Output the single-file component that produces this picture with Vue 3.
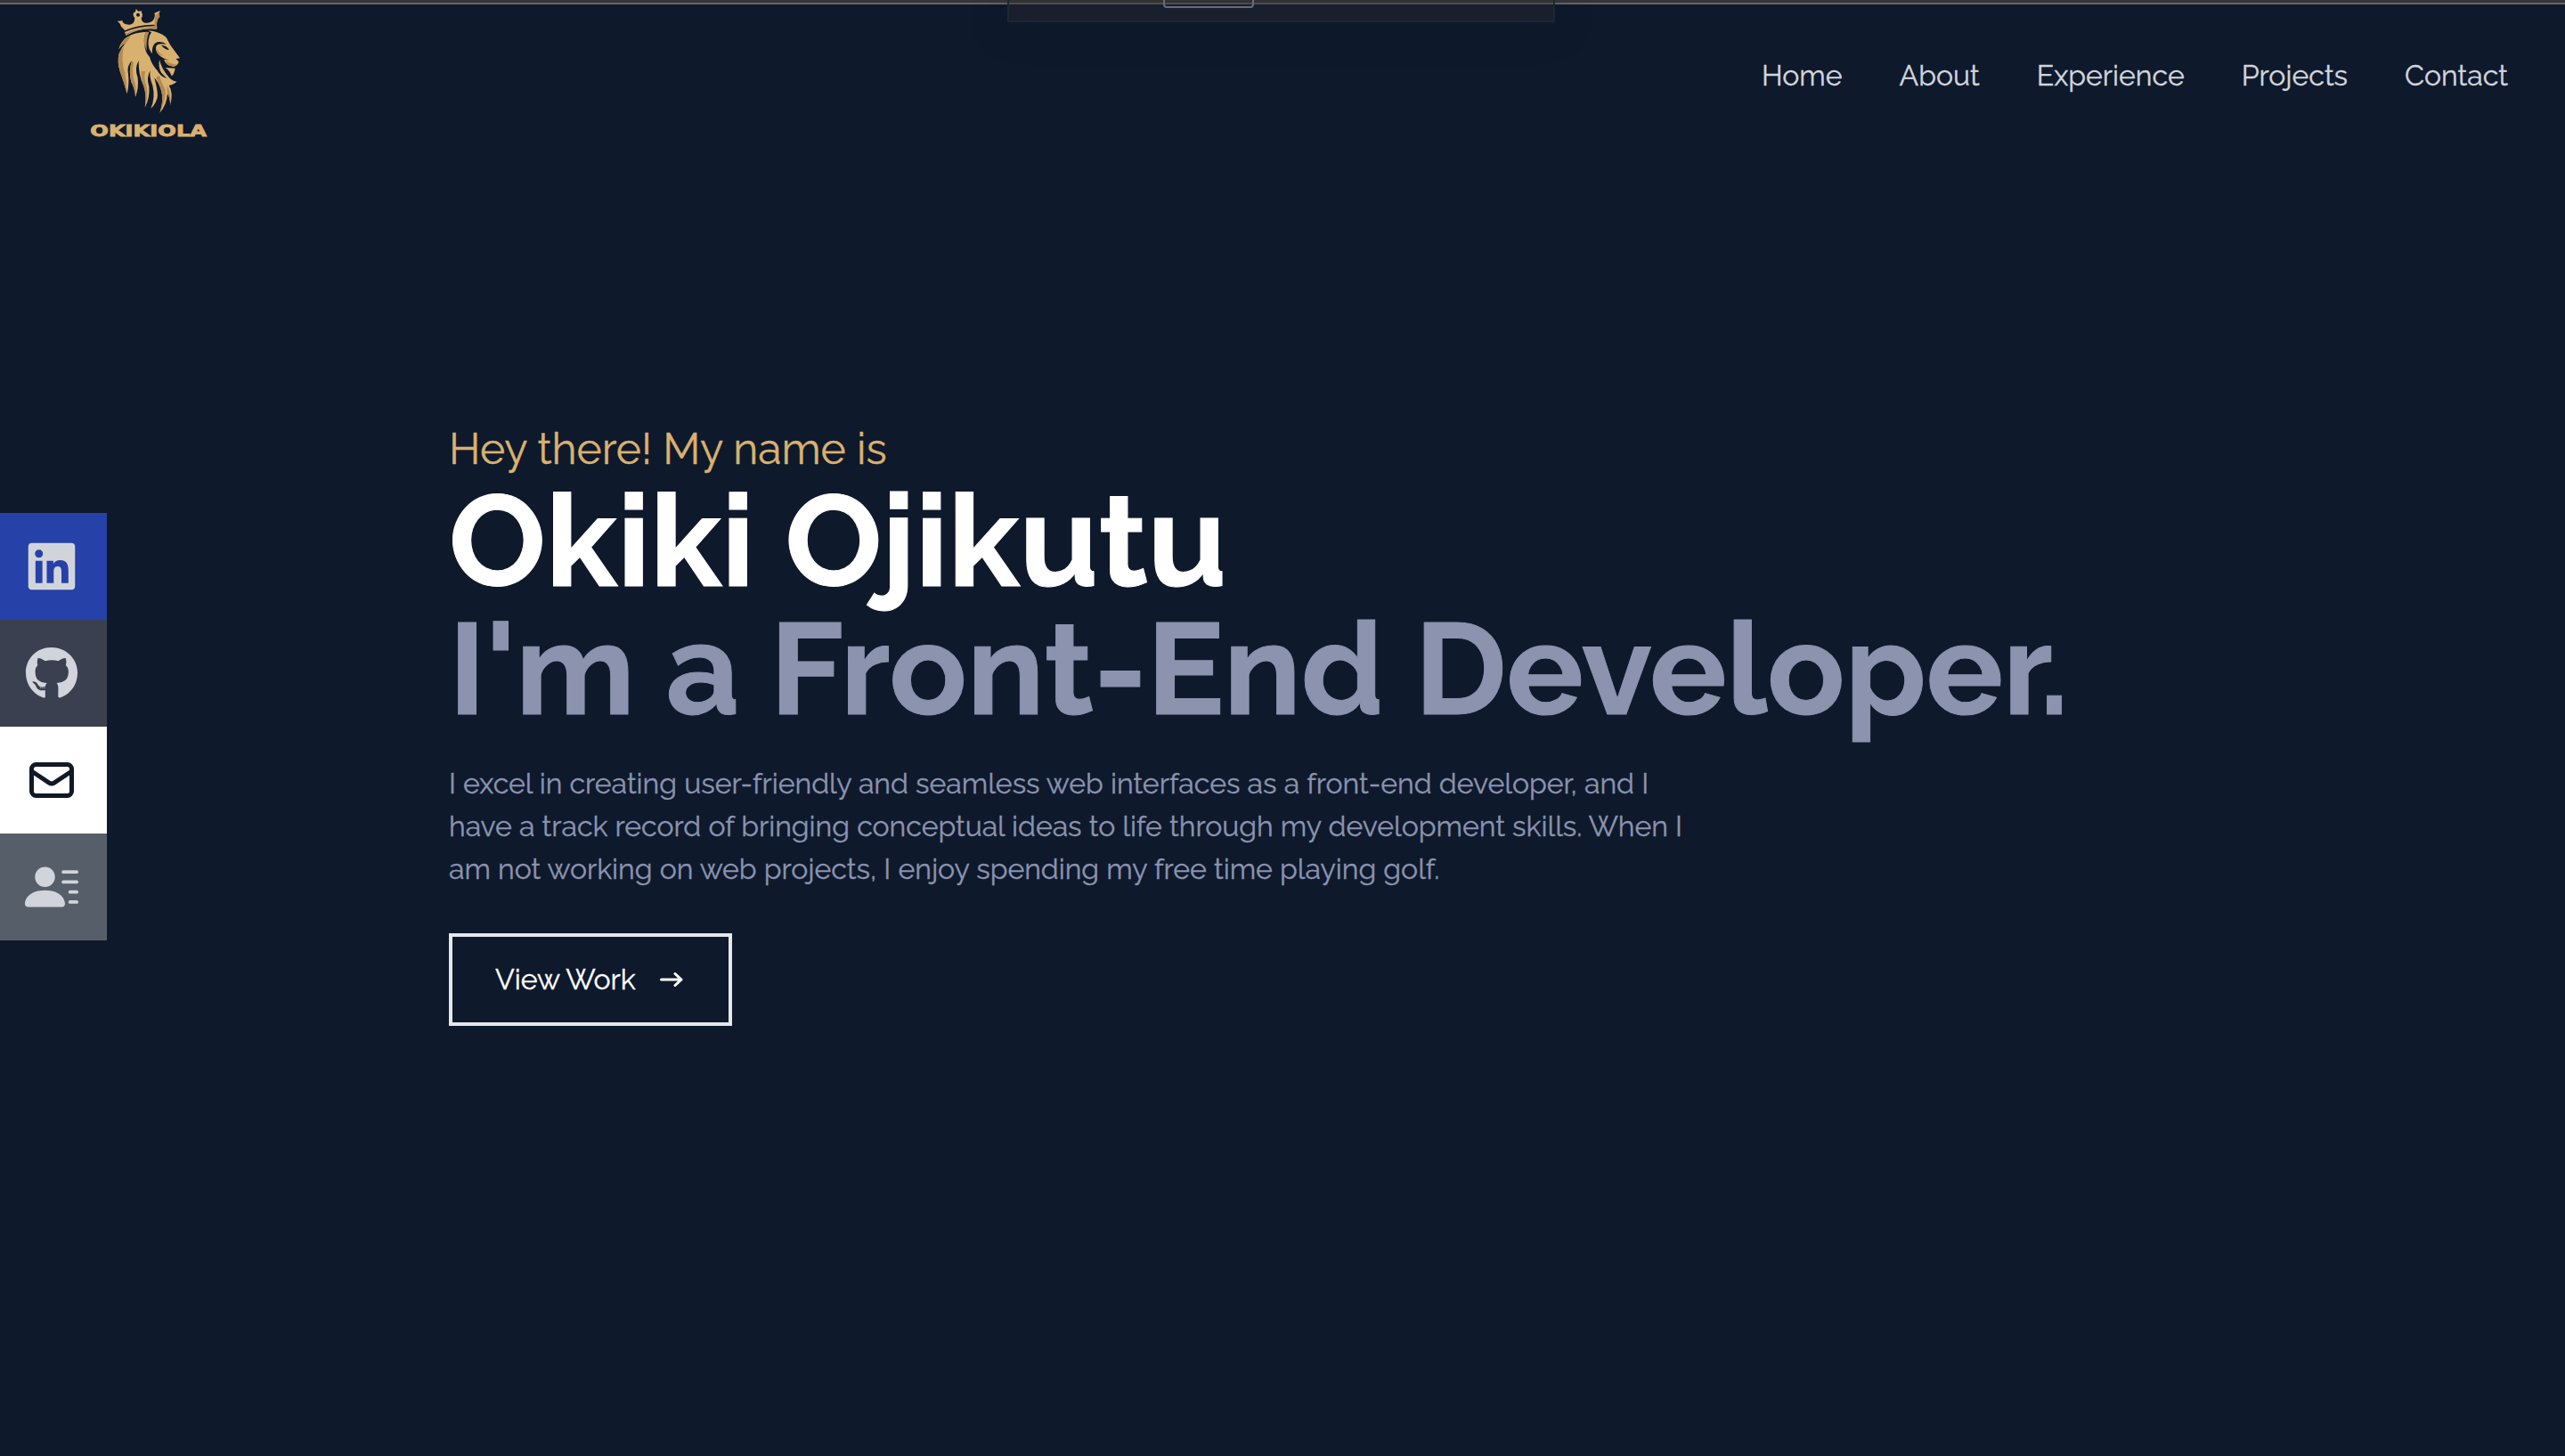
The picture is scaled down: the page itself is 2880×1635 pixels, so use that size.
<script setup>
const links = ['Home', 'About', 'Experience', 'Projects', 'Contact']
const socials = [
  { name: 'linkedin', box: '0 0 448 512', path: 'M416 32H31.9C14.3 32 0 46.5 0 64.3v383.4C0 465.5 14.3 480 31.9 480H416c17.6 0 32-14.5 32-32.3V64.3c0-17.8-14.4-32.3-32-32.3zM135.4 416H69V202.2h66.5V416zm-33.2-243c-21.3 0-38.5-17.3-38.5-38.5S80.9 96 102.2 96c21.2 0 38.5 17.3 38.5 38.5 0 21.3-17.2 38.5-38.5 38.5zm282.1 243h-66.4V312c0-24.8-.5-56.7-34.5-56.7-34.6 0-39.9 27-39.9 54.9V416h-66.4V202.2h63.7v29.2h.9c8.9-16.8 30.6-34.5 62.9-34.5 67.2 0 79.7 44.3 79.7 101.9V416z' },
  { name: 'github', box: '0 0 496 512', path: 'M165.9 397.4c0 2-2.3 3.6-5.2 3.6-3.3.3-5.6-1.3-5.6-3.6 0-2 2.3-3.6 5.2-3.6 3-.3 5.6 1.3 5.6 3.6zm-31.1-4.5c-.7 2 1.3 4.3 4.3 4.9 2.6 1 5.6 0 6.2-2s-1.3-4.3-4.3-5.2c-2.6-.7-5.5.3-6.2 2.3zm44.2-1.7c-2.9.7-4.9 2.6-4.6 4.9.3 2 2.9 3.3 5.9 2.6 2.9-.7 4.9-2.6 4.6-4.6-.3-1.9-3-3.2-5.9-2.9zM244.8 8C106.1 8 0 113.3 0 252c0 110.9 69.8 205.8 169.5 239.2 12.8 2.3 17.3-5.6 17.3-12.1 0-6.2-.3-40.4-.3-61.4 0 0-70 15-84.7-29.8 0 0-11.4-29.1-27.8-36.6 0 0-22.9-15.7 1.6-15.4 0 0 24.9 2 38.6 25.8 21.9 38.6 58.6 27.5 72.9 20.9 2.3-16 8.8-27.1 16-33.7-55.9-6.2-112.3-14.3-112.3-110.5 0-27.5 7.6-41.3 23.6-58.9-2.6-6.5-11.1-33.3 2.6-67.9 20.9-6.5 69 27 69 27 20-5.6 41.5-8.5 62.8-8.5s42.8 2.9 62.8 8.5c0 0 48.1-33.6 69-27 13.7 34.7 5.2 61.4 2.6 67.9 16 17.7 25.8 31.5 25.8 58.9 0 96.5-58.9 104.2-114.8 110.5 9.2 7.9 17 22.9 17 46.4 0 33.7-.3 75.4-.3 83.6 0 6.5 4.6 14.4 17.3 12.1C428.2 457.8 496 362.9 496 252 496 113.3 383.5 8 244.8 8z' },
  { name: 'mail', box: '0 0 24 24', stroke: true, path: 'M3 8l7.89 5.26a2 2 0 002.22 0L21 8M5 19h14a2 2 0 002-2V7a2 2 0 00-2-2H5a2 2 0 00-2 2v10a2 2 0 002 2z' },
  { name: 'resume', box: '0 0 16 16', path: 'M6 8a3 3 0 1 0 0-6 3 3 0 0 0 0 6zm-5 6s-1 0-1-1 1-4 6-4 6 3 6 4-1 1-1 1H1zM11 3.5a.5.5 0 0 1 .5-.5h4a.5.5 0 0 1 0 1h-4a.5.5 0 0 1-.5-.5zm.5 2.5a.5.5 0 0 0 0 1h4a.5.5 0 0 0 0-1h-4zm2 3a.5.5 0 0 0 0 1h2a.5.5 0 0 0 0-1h-2zm0 3a.5.5 0 0 0 0 1h2a.5.5 0 0 0 0-1h-2z' },
]
</script>

<template>
  <div class="page">
    <div class="strip"></div>
    <div class="panel"><div class="panel-tab"></div></div>

    <header class="navbar">
      <svg class="logo" viewBox="0 0 540 510">
        <g fill="#d9b16f">
          <path d="M155 71L173 70Q171 75 177 79Q187 84 197 83Q208 82 212 72Q214 65 214 60Q206 53 210 43L216 40L218 30L226 38L237 37Q235 43 240 49Q240 57 236 61Q236 69 242 74Q252 80 263 76Q277 72 280 60Q284 51 280 44L299 36Q294 48 298 55L291 66Q286 80 289 84Q232 80 180 103Q175 94 168 90Q167 80 155 71Z" />
          <path d="M180 108Q232 86 289 88L287 98Q235 92 184 119Z" />
          <path d="M160 166Q172 112 252 107Q242 128 247 152Q248 174 264 192Q270 216 290 238Q300 258 322 264L304 246Q292 228 297 201Q304 232 330 262Q344 276 356 274Q347 285 329 288Q345 312 333 355Q334 332 324 315Q322 354 298 380Q313 335 303 305Q296 280 280 262Q296 322 288 335Q280 356 268 365Q284 330 274 288Q262 258 266 238Q252 262 262 292Q266 330 248 362Q255 322 244 290Q226 252 227 204Q212 232 224 262Q228 297 216 327Q215 300 202 276Q192 240 204 205Q186 222 192 250Q196 284 188 316Q178 278 164 240Q154 210 161 180Q170 158 184 144Q168 152 160 166Z" />
          <path d="M258 103Q298 106 320 126L334 152L366 196L353 198L362 208Q360 221 345 225L325 219Q315 211 312 200L330 203Q300 195 288 176Q280 158 291 150Q304 146 320 150Q308 138 289 142Q270 150 273 181Q257 163 260 137Q261 120 270 109Z" />
          <path d="M317 228L350 230Q347 250 338 256Q332 238 317 228Z" />
        </g>
        <g fill="#b28a52">
          <path d="M283 54L299 36Q294 48 298 55L291 66Q286 80 289 98L280 95Q280 76 283 54Z" />
          <path d="M184 119L182 113Q232 90 289 90L287 98Q235 92 184 119Z" />
          <path d="M160 166Q172 130 202 118Q190 140 184 144Q168 152 160 166Z" />
          <path d="M178 155Q166 200 180 244Q188 280 188 316Q178 278 164 240Q154 210 161 180Z" />
          <path d="M210 210Q202 250 215 280Q220 300 216 327Q215 300 202 276Q192 240 204 205Z" />
          <path d="M250 240Q242 265 254 292Q260 330 248 362Q255 322 244 290Q236 265 235 240Z" />
          <path d="M252 107Q242 128 247 152L254 172Q252 130 262 108Z" />
          <path d="M296 254Q310 290 316 300Q322 330 298 380Q313 335 303 305Q296 280 285 262Z" />
          <path d="M322 288Q338 315 333 355Q334 332 324 315Z" />
          <path d="M314 202Q332 216 356 218L345 225L325 219Z" />
          <path d="M286 156Q290 178 312 188Q296 188 288 176Z" />
        </g>
        <g fill="#0e192c">
          <circle cx="225" cy="50" r="6" />
          <path d="M303 152Q322 153 330 168Q316 168 303 152Z" />
        </g>
        <text class="wordmark" x="64" y="459" textLength="392" lengthAdjust="spacingAndGlyphs">OKIKIOLA</text>
      </svg>
      <nav class="links">
        <a v-for="l in links" :key="l">{{ l }}</a>
      </nav>
    </header>

    <aside class="socials">
      <a v-for="s in socials" :key="s.name" class="social" :class="s.name">
        <svg class="social-icon" :class="{ outlined: s.stroke }" :viewBox="s.box"><path :d="s.path" /></svg>
      </a>
    </aside>

    <main class="hero">
      <p class="greeting">Hey there! My name is</p>
      <h1 class="title name">Okiki Ojikutu</h1>
      <h2 class="title role">I'm a Front-End Developer.</h2>
      <p class="bio">
        I excel in creating user-friendly and seamless web interfaces as a front-end developer, and I
        have a track record of bringing conceptual ideas to life through my development skills. When I
        am not working on web projects, I enjoy spending my free time playing golf.
      </p>
      <button class="cta">
        <span class="cta-label">View Work</span>
        <svg class="arrow" viewBox="0 0 26 16"><path d="M1.5 8H24M17 1.5L24 8L17 14.5" /></svg>
      </button>
    </main>
  </div>
</template>

<style>
body {
  margin: 0;
  background: #0e192c;
}
</style>

<style scoped>
.page {
  position: relative;
  box-sizing: border-box;
  height: 1635px;
  overflow: hidden;
  background: #0e192c;
  font-family: Raleway, Lato, "Open Sans", sans-serif;
}
.strip {
  position: absolute;
  inset: 0 0 auto;
  height: 3px;
  background: #353638;
  border-bottom: 2px solid #656668;
}
.panel {
  position: absolute;
  top: 0;
  left: 1131px;
  box-sizing: border-box;
  width: 615px;
  height: 25px;
  border: 2px solid #1d2732;
  border-top: 0;
  background: linear-gradient(#323234 3px, #4d4d4f 3px, #4d4d4f 5px, #191f2d 5px);
  box-shadow: 0 4px 40px rgba(12, 24, 40, 0.4);
}
.panel-tab {
  box-sizing: border-box;
  width: 102px;
  height: 9px;
  margin-left: 173px;
  border: 2px solid #666b7b;
  border-top: 0;
  border-radius: 0 0 4px 4px;
}
.navbar {
  display: flex;
  justify-content: space-between;
  align-items: flex-start;
  height: 170px;
  padding: 0 64px 0 80px;
}
.logo {
  position: relative;
  width: 180px;
  height: 170px;
}
.wordmark {
  font: 700 51px "DejaVu Sans", sans-serif;
  fill: #d9b16f;
  stroke: #d9b16f;
  stroke-width: 2.5;
}
.links {
  display: flex;
  gap: 64px;
  padding-top: 61px;
  color: #d1d5db;
  font-size: 32px;
  line-height: 48px;
  white-space: nowrap;
}
.links,
.greeting,
.bio,
.cta {
  -webkit-text-stroke: 0.35px currentColor;
}
.socials {
  position: absolute;
  top: 576px;
  left: 0;
  width: 120px;
}
.social {
  display: flex;
  justify-content: center;
  align-items: center;
  box-sizing: border-box;
  height: 120px;
  padding-right: 4px;
  color: #d1d5db;
}
.linkedin { background: #2641a8; }
.github { background: #3b4050; }
.mail { background: #fff; color: #111827; }
.resume { background: #565f69; }
.social-icon {
  width: 60px;
  height: 60px;
  fill: currentColor;
}
.outlined {
  fill: none;
  stroke: currentColor;
  stroke-width: 2;
  stroke-linecap: round;
  stroke-linejoin: round;
}
.hero {
  padding: 302px 0 0 504px;
}
.greeting {
  margin: 0;
  color: #d9b16f;
  font-size: 48px;
  line-height: 64px;
}
.title {
  margin: 0;
  font-size: 144px;
  font-weight: 700;
  line-height: 144px;
  white-space: nowrap;
  -webkit-text-stroke: 1px currentColor;
}
.name { color: #fff; }
.role { color: #8b93af; }
.bio {
  width: 1400px;
  margin: 0;
  padding-top: 32px;
  color: #8b93af;
  font-size: 32px;
  line-height: 48px;
}
.cta {
  display: flex;
  align-items: center;
  gap: 27px;
  box-sizing: border-box;
  width: 318px;
  height: 104px;
  margin-top: 48px;
  padding: 0 48px;
  border: 4px solid #e5e7eb;
  background: none;
  color: #fff;
  font: inherit;
  font-size: 32px;
}
.cta-label {
  padding-bottom: 2px;
}
.arrow {
  width: 26px;
  height: 16px;
  fill: none;
  stroke: currentColor;
  stroke-width: 3;
  stroke-linecap: round;
  stroke-linejoin: round;
}
</style>
